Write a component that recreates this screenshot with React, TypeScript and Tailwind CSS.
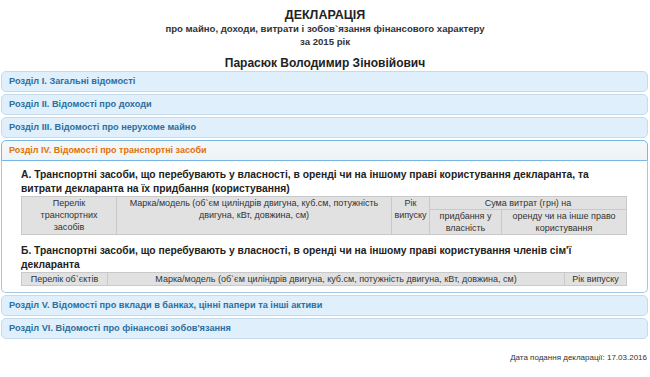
import React from "react";

const font = { fontFamily: '"Liberation Sans", Arial, sans-serif' };

function Header({ text, active = false }: { text: string; active?: boolean }) {
  return active ? (
    <div className="h-[21px] flex items-center pl-[7px] border border-[#79b7e7] rounded-t-[5px] bg-gradient-to-b from-[#f5f8f9] to-[#edf3f6] text-[#e17009] text-[9px] font-bold">
      {text}
    </div>
  ) : (
    <div className="h-[21px] flex items-center pl-[7px] border border-[#c5dbec] rounded-[5px] bg-[#dfeffc] text-[#2e6e9e] text-[9.2px] font-bold">
      {text}
    </div>
  );
}

const th = "border border-[#c9c9c9] bg-[#e1e1e1] font-normal text-[9px] leading-[12px] text-[#333] text-center align-top px-[2px] py-0";

export default function App() {
  return (
    <div style={font} className="w-[650px] h-[377px] bg-white text-[#333] overflow-hidden">
      <div className="flex flex-col items-center pt-[8px]">
        <div className="text-[12.5px] leading-[14px] font-bold text-[#222]">ДЕКЛАРАЦІЯ</div>
        <div className="text-[9.6px] leading-[13px] font-bold text-[#333]">про майно, доходи, витрати і зобов`язання фінансового характеру</div>
        <div className="text-[9.6px] leading-[13px] font-bold text-[#333]">за 2015 рік</div>
        <div className="mt-[7px] text-[12px] leading-[16px] font-bold text-[#222]">Парасюк Володимир Зіновійович</div>
      </div>
      <div className="mx-[1px] w-[647px] flex flex-col gap-[2px]">
        <Header text="Розділ І. Загальні відомості" />
        <Header text="Розділ ІІ. Відомості про доходи" />
        <Header text="Розділ ІІІ. Відомості про нерухоме майно" />
        <div>
          <Header text="Розділ IV. Відомості про транспортні засоби" active />
          <div className="border border-t-0 border-[#a6c9e2] rounded-b-[5px] bg-white pl-[19px] pr-[19px] pt-[7px] h-[132px]">
            <div className="text-[10.3px] leading-[14px] font-bold text-[#222]">
              А. Транспортні засоби, що перебувають у власності, в оренді чи на іншому праві користування декларанта, та витрати декларанта на їх придбання (користування)
            </div>
            <table className="w-[606px] border-collapse">
              <thead>
                <tr>
                  <th rowSpan={2} className={th + " w-[95px]"}>Перелік транспортних засобів</th>
                  <th rowSpan={2} className={th + " w-[275px]"}>Марка/модель (об`єм циліндрів двигуна, куб.см, потужність двигуна, кВт, довжина, см)</th>
                  <th rowSpan={2} className={th + " w-[38px]"}>Рік випуску</th>
                  <th colSpan={2} className={th}>Сума витрат (грн) на</th>
                </tr>
                <tr>
                  <th className={th + " w-[72px]"}>придбання у власність</th>
                  <th className={th}>оренду чи на інше право користування</th>
                </tr>
              </thead>
            </table>
            <div className="mt-[9px] text-[10.3px] leading-[14px] font-bold text-[#222]">
              Б. Транспортні засоби, що перебувають у власності, в оренді чи на іншому праві користування членів сім'ї декларанта
            </div>
            <table className="w-[606px] border-collapse">
              <thead>
                <tr>
                  <th className={th + " w-[86px]"}>Перелік об`єктів</th>
                  <th className={th}>Марка/модель (об`єм циліндрів двигуна, куб.см, потужність двигуна, кВт, довжина, см)</th>
                  <th className={th + " w-[62px]"}>Рік випуску</th>
                </tr>
              </thead>
            </table>
          </div>
        </div>
        <Header text="Розділ V. Відомості про вклади в банках, цінні папери та інші активи" />
        <Header text="Розділ VI. Відомості про фінансові зобов'язання" />
      </div>
      <div className="mt-[13px] pr-[3px] text-right text-[8px] leading-[12px] text-[#333]">Дата подання декларації: 17.03.2016</div>
    </div>
  );
}
